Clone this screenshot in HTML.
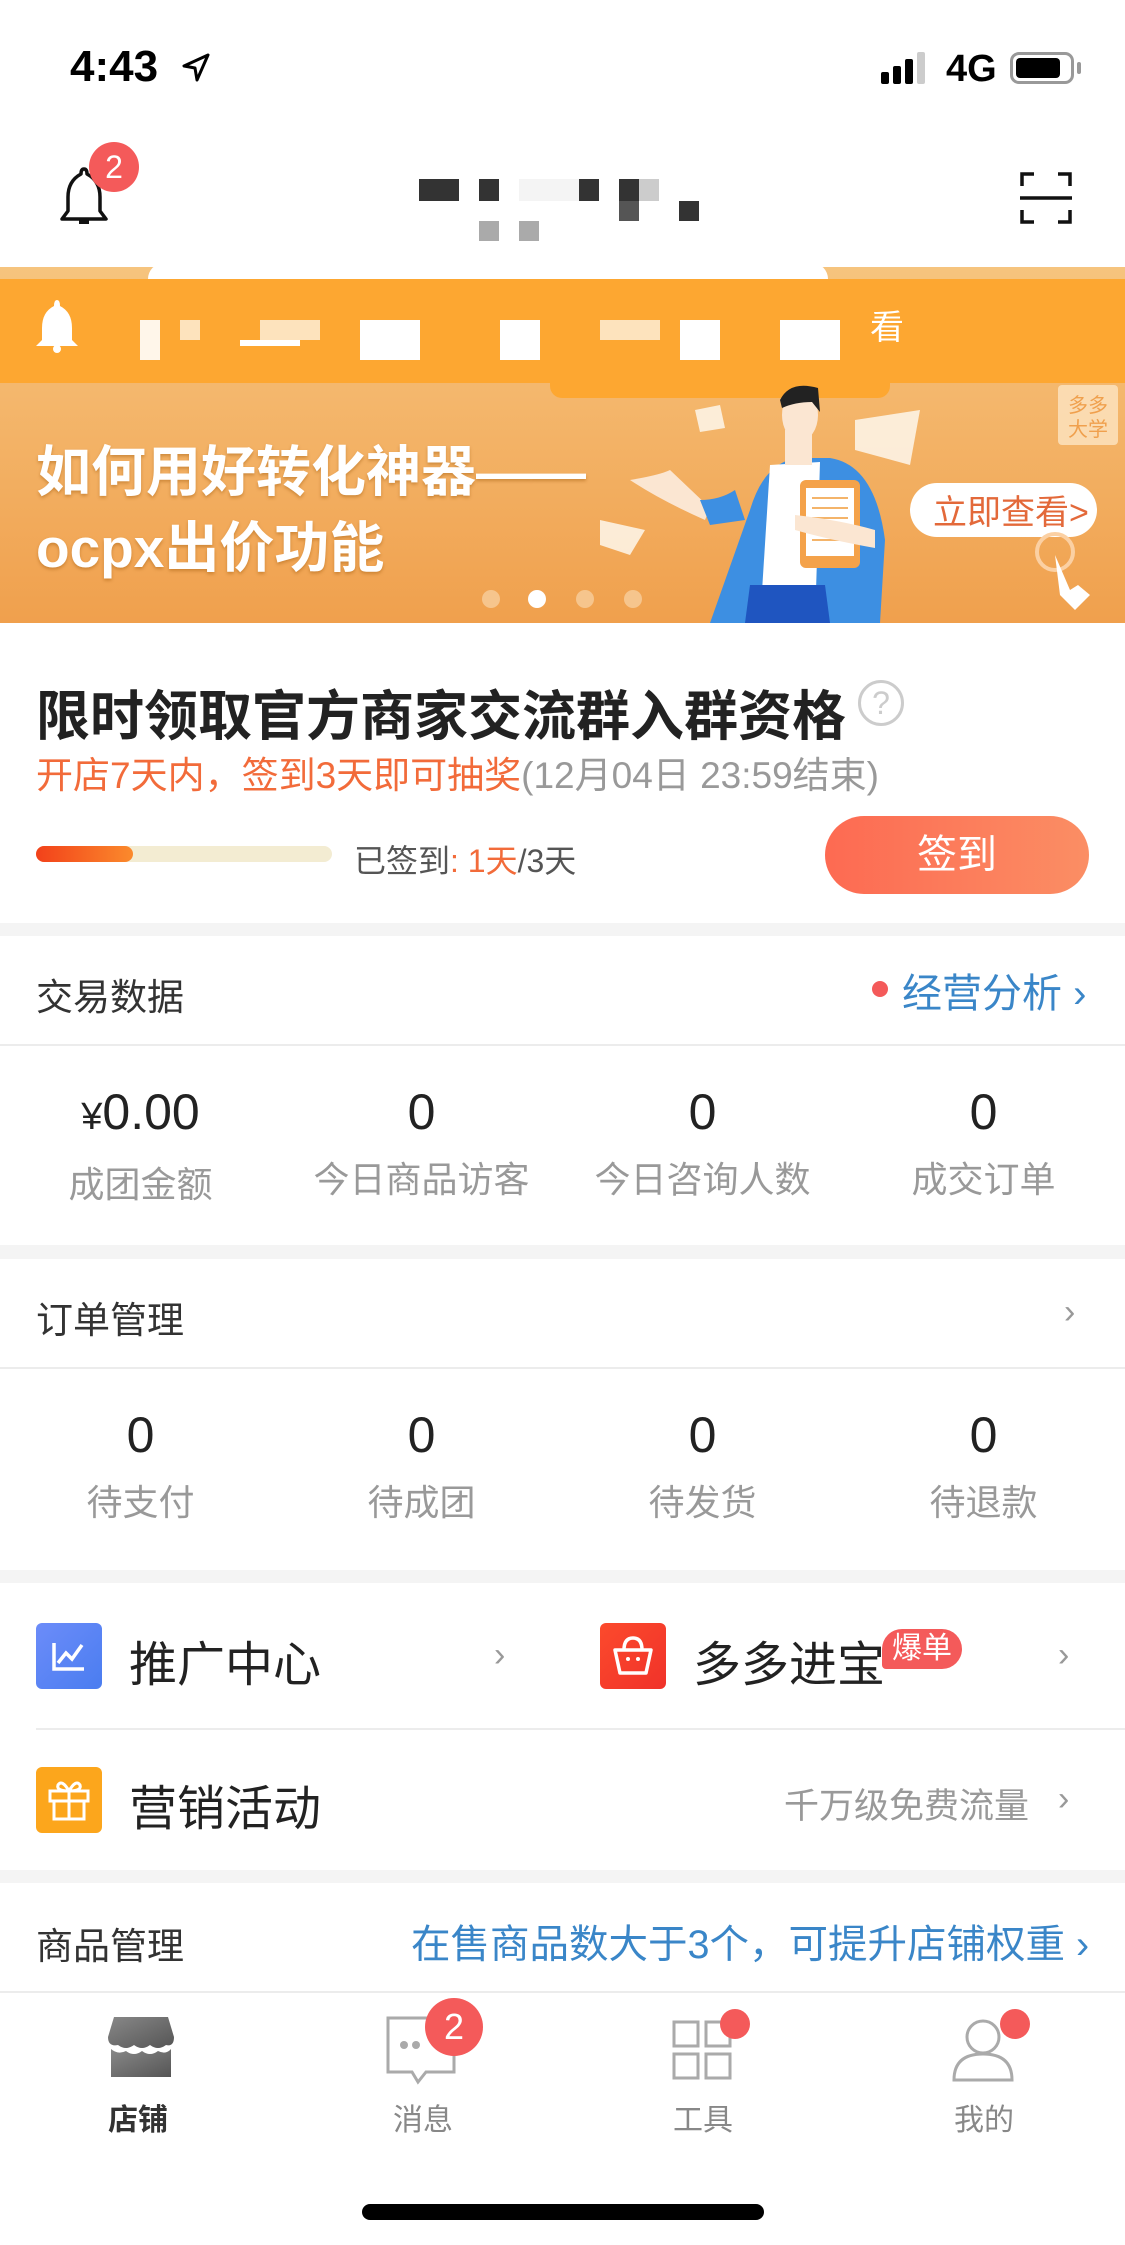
<!DOCTYPE html>
<html><head><meta charset="utf-8">
<style>
*{margin:0;padding:0;box-sizing:border-box}
body{width:1125px;height:2245px;overflow:hidden;background:#fff;font-family:"Liberation Sans","Noto Sans CJK SC",sans-serif;position:relative;color:#333}
.a{position:absolute}
.gap{position:absolute;left:0;width:1125px;background:#f4f4f4}
.line{position:absolute;height:2px;background:#ececec}
.col{position:absolute;width:281px;text-align:center}
.num{font-size:50px;color:#222;line-height:60px}
.lab{font-size:36px;color:#999;line-height:44px;margin-top:16px}
.chev{position:absolute;font-size:34px;color:#999}
</style></head><body>
<!-- status bar -->
<div class="a" style="left:70px;top:42px;font-size:44px;font-weight:bold;color:#000">4:43</div>
<svg class="a" style="left:180px;top:52px" width="32" height="32" viewBox="0 0 32 32"><path d="M28 3 L4 14 L15 16 L17 28 Z" fill="none" stroke="#000" stroke-width="3" stroke-linejoin="round"/></svg>
<div class="a" style="left:881px;top:72px;width:8px;height:12px;background:#000;border-radius:2px"></div>
<div class="a" style="left:893px;top:66px;width:8px;height:18px;background:#000;border-radius:2px"></div>
<div class="a" style="left:905px;top:59px;width:8px;height:25px;background:#000;border-radius:2px"></div>
<div class="a" style="left:917px;top:52px;width:8px;height:32px;background:#ccc;border-radius:2px"></div>
<div class="a" style="left:946px;top:48px;font-size:38px;font-weight:bold;color:#000">4G</div>
<div class="a" style="left:1010px;top:52px;width:64px;height:32px;border:3px solid #999;border-radius:9px;padding:3px"><div style="height:100%;background:#000;border-radius:4px;width:44px"></div></div>
<div class="a" style="left:1077px;top:62px;width:4px;height:12px;background:#999;border-radius:2px"></div>
<!-- header -->
<svg class="a" style="left:56px;top:165px" width="56" height="62" viewBox="0 0 56 62"><path d="M28 4 Q31 4 31 9 Q44 16 44 32 L44 46 L50 54 L6 54 L12 46 L12 32 Q12 16 25 9 Q25 4 28 4Z" fill="none" stroke="#111" stroke-width="3.5" stroke-linejoin="round"/><path d="M23 57 L33 57" stroke="#111" stroke-width="4"/></svg>
<div class="a" style="left:89px;top:142px;width:50px;height:50px;border-radius:25px;background:#f45a5a;color:#fff;font-size:32px;text-align:center;line-height:50px">2</div>
<div class="a" style="left:419px;top:179px;width:40px;height:22px;background:#333"></div>
<div class="a" style="left:479px;top:179px;width:20px;height:22px;background:#333"></div>
<div class="a" style="left:519px;top:179px;width:60px;height:22px;background:#f4f4f4"></div>
<div class="a" style="left:579px;top:179px;width:20px;height:22px;background:#333"></div>
<div class="a" style="left:619px;top:179px;width:20px;height:22px;background:#333"></div>
<div class="a" style="left:639px;top:179px;width:20px;height:22px;background:#ccc"></div>
<div class="a" style="left:619px;top:201px;width:20px;height:20px;background:#555"></div>
<div class="a" style="left:679px;top:201px;width:20px;height:20px;background:#333"></div>
<div class="a" style="left:479px;top:221px;width:20px;height:20px;background:#aaa"></div>
<div class="a" style="left:519px;top:221px;width:20px;height:20px;background:#aaa"></div>
<svg class="a" style="left:1020px;top:172px" width="52" height="52" viewBox="0 0 52 52"><path d="M2 14 V2 H14 M38 2 H50 V14 M50 38 V50 H38 M14 50 H2 V38 M0 26 H52" fill="none" stroke="#111" stroke-width="3.5"/></svg>
<!-- banner -->
<div class="a" style="left:0;top:265px;width:1125px;height:358px;background:linear-gradient(180deg,#f6c47e,#f0a04d)"></div>
<div class="a" style="left:0;top:279px;width:1125px;height:104px;background:#fda731"></div>
<div class="a" style="left:0;top:263px;width:1125px;height:4px;background:#fff"></div>
<div class="a" style="left:148px;top:263px;width:680px;height:16px;background:#fff;border-radius:40px 40px 0 0"></div>
<div class="a" style="left:550px;top:380px;width:340px;height:18px;background:#fda731;border-radius:0 0 12px 12px"></div>
<svg class="a" style="left:34px;top:298px" width="46" height="56" viewBox="0 0 46 56"><path d="M23 2 Q26 2 26 8 Q38 14 38 30 L38 42 L44 48 L2 48 L8 42 L8 30 Q8 14 20 8 Q20 2 23 2Z" fill="#fff"/><circle cx="23" cy="51" r="4" fill="#fff"/></svg>
<div class="a" style="left:140px;top:320px;width:20px;height:40px;background:#fff;opacity:.9"></div>
<div class="a" style="left:180px;top:320px;width:20px;height:20px;background:#fde3bd"></div>
<div class="a" style="left:260px;top:320px;width:60px;height:20px;background:#fde3bd"></div>
<div class="a" style="left:240px;top:340px;width:60px;height:6px;background:#fff"></div>
<div class="a" style="left:360px;top:320px;width:60px;height:40px;background:#fff"></div>
<div class="a" style="left:500px;top:320px;width:40px;height:40px;background:#fff"></div>
<div class="a" style="left:600px;top:320px;width:60px;height:20px;background:#fde3bd"></div>
<div class="a" style="left:680px;top:320px;width:40px;height:40px;background:#fff"></div>
<div class="a" style="left:780px;top:320px;width:60px;height:40px;background:#fff"></div>
<div class="a" style="left:870px;top:300px;font-size:34px;color:#fff">看</div>
<!-- illustration (relative to 600,380) -->
<svg class="a" style="left:600px;top:380px" width="525" height="243" viewBox="0 0 525 243">
<g fill="#fdf3e4" opacity=".9">
<path d="M95 30 L120 25 L125 48 L100 52Z"/>
<path d="M255 40 L320 30 L310 85 L255 70Z"/>
<path d="M0 140 L45 150 L30 175 L0 165Z"/>
</g>
<path d="M110 243 L150 130 Q165 80 200 78 L230 78 Q275 85 285 160 L280 243Z" fill="#3d8fe2"/>
<path d="M170 85 L220 82 L215 243 L160 243Z" fill="#fff"/>
<path d="M150 205 L225 205 L230 243 L145 243Z" fill="#1f55c0"/>
<path d="M30 100 Q60 95 70 90 L110 128 L105 140 Q60 120 30 100Z" fill="#fbe6d2"/>
<path d="M100 120 Q120 120 135 110 L145 140 L110 145Z" fill="#3d8fe2"/>
<path d="M185 50 L212 50 L212 85 L185 85Z" fill="#fbe6d2"/>
<ellipse cx="200" cy="35" rx="18" ry="26" fill="#fbe6d2"/>
<path d="M180 20 Q190 0 218 8 L220 32 L212 22 Q195 22 182 28Z" fill="#222"/>
<rect x="200" y="100" width="60" height="88" rx="6" fill="#f4a24a"/>
<rect x="206" y="108" width="48" height="68" fill="#fff"/>
<g stroke="#f4b46a" stroke-width="2"><path d="M212 118 H248 M212 128 H248 M212 138 H248 M212 160 H248"/></g>
<path d="M195 135 Q240 140 275 150 L275 168 Q230 160 195 150Z" fill="#fbe6d2"/>
<rect x="310" y="103" width="187" height="54" rx="27" fill="#fff"/>
<text x="333" y="144" font-size="34" fill="#e3693a" font-family="Liberation Sans,Noto Sans CJK SC,sans-serif">立即查看&gt;</text>
<circle cx="455" cy="172" r="18" fill="none" stroke="#fbd0a3" stroke-width="4"/>
<path d="M455 175 L470 210 L478 205 L490 215 L475 230 L460 215Z" fill="#fff"/>
<rect x="458" y="5" width="60" height="60" rx="4" fill="#fbe2bd" opacity=".85"/>
<text x="468" y="32" font-size="20" fill="#f0a04d" font-family="Liberation Sans,Noto Sans CJK SC,sans-serif">多多</text>
<text x="468" y="56" font-size="20" fill="#f0a04d" font-family="Liberation Sans,Noto Sans CJK SC,sans-serif">大学</text>
</svg>
<div class="a" style="left:36px;top:434px;font-size:55px;font-weight:bold;color:#fff;line-height:76px;text-shadow:0 2px 3px rgba(150,80,0,.4)">如何用好转化神器——<br>ocpx出价功能</div>
<div class="a" style="left:482px;top:590px;width:18px;height:18px;border-radius:9px;background:#f6c58d"></div>
<div class="a" style="left:528px;top:590px;width:18px;height:18px;border-radius:9px;background:#fff"></div>
<div class="a" style="left:576px;top:590px;width:18px;height:18px;border-radius:9px;background:#f6c58d"></div>
<div class="a" style="left:624px;top:590px;width:18px;height:18px;border-radius:9px;background:#f6c58d"></div>
<!-- sign-in card -->
<div class="a" style="left:36px;top:672px;font-size:54px;font-weight:bold;color:#222">限时领取官方商家交流群入群资格</div>
<div class="a" style="left:858px;top:680px;width:46px;height:46px;border:3px solid #ccc;border-radius:23px;color:#ccc;font-size:32px;text-align:center;line-height:40px">?</div>
<div class="a" style="left:36px;top:745px;font-size:37px;color:#f26b3a">开店7天内，签到3天即可抽奖<span style="color:#999">(12月04日 23:59结束)</span></div>
<div class="a" style="left:36px;top:846px;width:296px;height:16px;border-radius:8px;background:#f3ecd2"><div style="width:97px;height:16px;border-radius:8px;background:linear-gradient(90deg,#f2411a,#fb8a2c)"></div></div>
<div class="a" style="left:354px;top:836px;font-size:32px;color:#555">已签到<span style="color:#f26b3a">: 1天</span>/3天</div>
<div class="a" style="left:825px;top:816px;width:264px;height:78px;border-radius:39px;background:linear-gradient(90deg,#fd6a52,#fb8e64);color:#fff;font-size:40px;text-align:center;line-height:78px">签到</div>
<div class="gap" style="top:923px;height:13px"></div>
<!-- 交易数据 -->
<div class="a" style="left:36px;top:967px;font-size:37px;color:#333">交易数据</div>
<div class="a" style="left:872px;top:981px;width:16px;height:16px;border-radius:8px;background:#f45a5a"></div>
<div class="a" style="left:902px;top:961px;font-size:40px;color:#3a86c8">经营分析 ›</div>
<div class="line" style="left:0;top:1044px;width:1125px"></div>
<div class="col" style="left:0;top:1082px"><div class="num"><span style="font-size:38px">¥</span>0.00</div><div class="lab">成团金额</div></div>
<div class="col" style="left:281px;top:1082px"><div class="num">0</div><div class="lab">今日商品访客</div></div>
<div class="col" style="left:562px;top:1082px"><div class="num">0</div><div class="lab">今日咨询人数</div></div>
<div class="col" style="left:843px;top:1082px"><div class="num">0</div><div class="lab">成交订单</div></div>
<div class="gap" style="top:1245px;height:14px"></div>
<!-- 订单管理 -->
<div class="a" style="left:36px;top:1290px;font-size:37px;color:#333">订单管理</div>
<div class="chev" style="left:1064px;top:1293px">›</div>
<div class="line" style="left:0;top:1367px;width:1125px"></div>
<div class="col" style="left:0;top:1405px"><div class="num">0</div><div class="lab">待支付</div></div>
<div class="col" style="left:281px;top:1405px"><div class="num">0</div><div class="lab">待成团</div></div>
<div class="col" style="left:562px;top:1405px"><div class="num">0</div><div class="lab">待发货</div></div>
<div class="col" style="left:843px;top:1405px"><div class="num">0</div><div class="lab">待退款</div></div>
<div class="gap" style="top:1570px;height:13px"></div>
<!-- tools rows -->
<div class="a" style="left:36px;top:1623px;width:66px;height:66px;border-radius:6px;background:linear-gradient(135deg,#6c8cf9,#4a7df0)"><svg width="66" height="66" viewBox="0 0 66 66"><path d="M18 20 V46 H48 M22 40 L30 30 L36 36 L46 22" fill="none" stroke="#fff" stroke-width="3.5"/></svg></div>
<div class="a" style="left:129px;top:1625px;font-size:48px;color:#222">推广中心</div>
<div class="chev" style="left:494px;top:1636px">›</div>
<div class="a" style="left:600px;top:1623px;width:66px;height:66px;border-radius:6px;background:linear-gradient(135deg,#fc4a2c,#f0322a)"><svg width="66" height="66" viewBox="0 0 66 66"><path d="M15 27 H51 L46 50 H20Z M24 27 Q24 15 33 15 Q42 15 42 27" fill="none" stroke="#fff" stroke-width="3.5" stroke-linejoin="round"/><circle cx="28" cy="36" r="2" fill="#fff"/><circle cx="38" cy="36" r="2" fill="#fff"/></svg></div>
<div class="a" style="left:693px;top:1625px;font-size:48px;color:#222">多多进宝</div>
<div class="a" style="left:882px;top:1629px;width:80px;height:40px;border-radius:20px 20px 20px 4px;background:#f45a5a;color:#fff;font-size:30px;text-align:center;line-height:40px">爆单</div>
<div class="chev" style="left:1058px;top:1636px">›</div>
<div class="line" style="left:36px;top:1728px;width:1089px"></div>
<div class="a" style="left:36px;top:1767px;width:66px;height:66px;border-radius:6px;background:#fca61c"><svg width="66" height="66" viewBox="0 0 66 66"><path d="M14 24 H52 V34 H14Z M18 34 V52 H48 V34 M33 24 V52 M33 24 Q26 12 22 18 Q20 24 33 24 Q40 12 44 18 Q46 24 33 24" fill="none" stroke="#fff" stroke-width="3"/></svg></div>
<div class="a" style="left:129px;top:1769px;font-size:48px;color:#222">营销活动</div>
<div class="a" style="left:784px;top:1778px;font-size:35px;color:#999">千万级免费流量</div>
<div class="chev" style="left:1058px;top:1780px">›</div>
<div class="gap" style="top:1870px;height:13px"></div>
<!-- 商品管理 -->
<div class="a" style="left:36px;top:1916px;font-size:37px;color:#333">商品管理</div>
<div class="a" style="left:411px;top:1913px;font-size:39.5px;color:#3a86c8">在售商品数大于3个，可提升店铺权重 ›</div>
<div class="line" style="left:0;top:1991px;width:1125px"></div>
<!-- tab bar -->
<svg class="a" style="left:108px;top:2017px" width="66" height="62" viewBox="0 0 66 62"><defs><linearGradient id="g" x1="0" y1="0" x2="1" y2="1"><stop offset="0" stop-color="#888"/><stop offset="1" stop-color="#555"/></linearGradient></defs><path d="M6 0 H60 L66 20 Q66 30 58 28 Q50 34 42 28 Q34 34 26 28 Q18 34 10 28 Q0 30 0 20Z" fill="url(#g)"/><path d="M3 32 Q10 38 18 34 Q26 40 34 34 Q42 40 50 34 Q58 38 63 32 V60 H3Z" fill="url(#g)"/></svg>
<div class="a" style="left:108px;top:2095px;font-size:30px;font-weight:bold;color:#333">店铺</div>
<svg class="a" style="left:386px;top:2016px" width="72" height="76" viewBox="0 0 72 76"><path d="M2 2 H68 V56 H40 L32 66 L26 56 H2Z" fill="none" stroke="#aaa" stroke-width="3"/><circle cx="18" cy="29" r="4" fill="#aaa"/><circle cx="30" cy="29" r="4" fill="#aaa"/></svg>
<div class="a" style="left:425px;top:1998px;width:58px;height:58px;border-radius:29px;background:#f45a5a;color:#fff;font-size:36px;text-align:center;line-height:58px">2</div>
<div class="a" style="left:393px;top:2095px;font-size:30px;color:#888">消息</div>
<svg class="a" style="left:672px;top:2020px" width="62" height="62" viewBox="0 0 62 62"><g fill="none" stroke="#aaa" stroke-width="3"><rect x="2" y="2" width="24" height="24"/><rect x="34" y="2" width="24" height="24"/><rect x="2" y="34" width="24" height="24"/><rect x="34" y="34" width="24" height="24"/></g></svg>
<div class="a" style="left:720px;top:2009px;width:30px;height:30px;border-radius:15px;background:#f45a5a"></div>
<div class="a" style="left:673px;top:2095px;font-size:30px;color:#888">工具</div>
<svg class="a" style="left:952px;top:2018px" width="62" height="64" viewBox="0 0 62 64"><circle cx="31" cy="19" r="16" fill="none" stroke="#aaa" stroke-width="3"/><path d="M2 62 Q2 36 31 36 Q60 36 60 62Z" fill="none" stroke="#aaa" stroke-width="3"/></svg>
<div class="a" style="left:1000px;top:2009px;width:30px;height:30px;border-radius:15px;background:#f45a5a"></div>
<div class="a" style="left:954px;top:2095px;font-size:30px;color:#888">我的</div>
<div class="a" style="left:362px;top:2204px;width:402px;height:16px;border-radius:8px;background:#000"></div>
</body></html>
